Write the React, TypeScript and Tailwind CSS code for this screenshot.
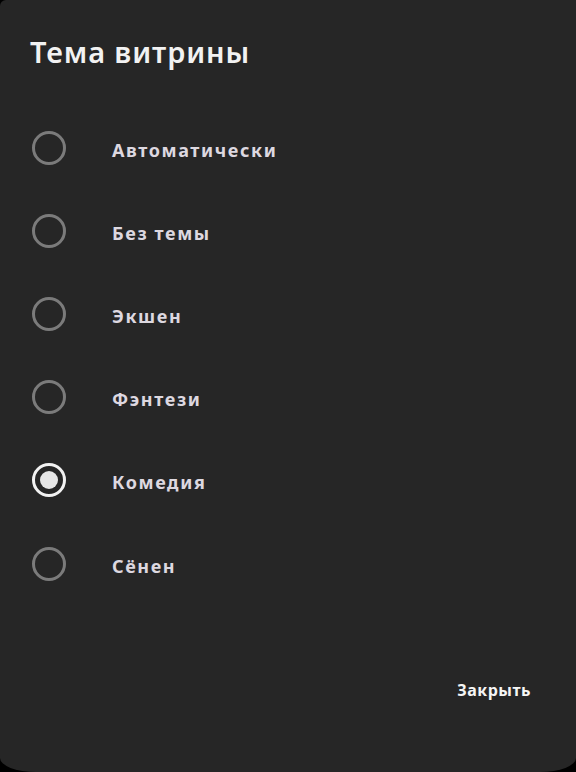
import React from "react";

const options = ["Автоматически", "Без темы", "Экшен", "Фэнтези", "Комедия", "Сёнен"];
const selected = 4;

export default function App() {
  return (
    <div className="w-[576px] h-[772px] bg-black overflow-hidden font-['Noto_Sans',sans-serif]">
      <div className="w-full h-full bg-[#262626] rounded-tl-[6px] rounded-bl-[36px_14px] rounded-br-[36px_14px] flex flex-col">
        <div className="pl-[30px] pt-[34px] h-[106px]">
          <h1 className="text-[29px] leading-[36px] font-semibold tracking-[0.9px] text-[#f2f2f2]">Тема витрины</h1>
        </div>
        <div className="flex flex-col">
          {options.map((o, i) => (
            <div key={o} className="h-[83.2px] flex items-center">
              <div className="w-[98px] flex justify-center">
                {i === selected ? (
                  <div className="w-[34px] h-[34px] rounded-full border-[3px] border-[#f2f2f2] flex items-center justify-center">
                    <div className="w-[18px] h-[18px] rounded-full bg-[#e6e6e6]" />
                  </div>
                ) : (
                  <div className="w-[34px] h-[34px] rounded-full border-[3px] border-[#7b7b7b]" />
                )}
              </div>
              <span className="ml-[14px] pt-[5px] text-[18px] font-bold tracking-[1.6px] text-[#ddd8e0]">{o}</span>
            </div>
          ))}
        </div>
        <div className="flex-1" />
        <div className="flex justify-end pr-[45px] pb-[70px]">
          <button className="text-[16px] font-bold tracking-[0.5px] text-[#f5f5f5]">Закрыть</button>
        </div>
      </div>
    </div>
  );
}
